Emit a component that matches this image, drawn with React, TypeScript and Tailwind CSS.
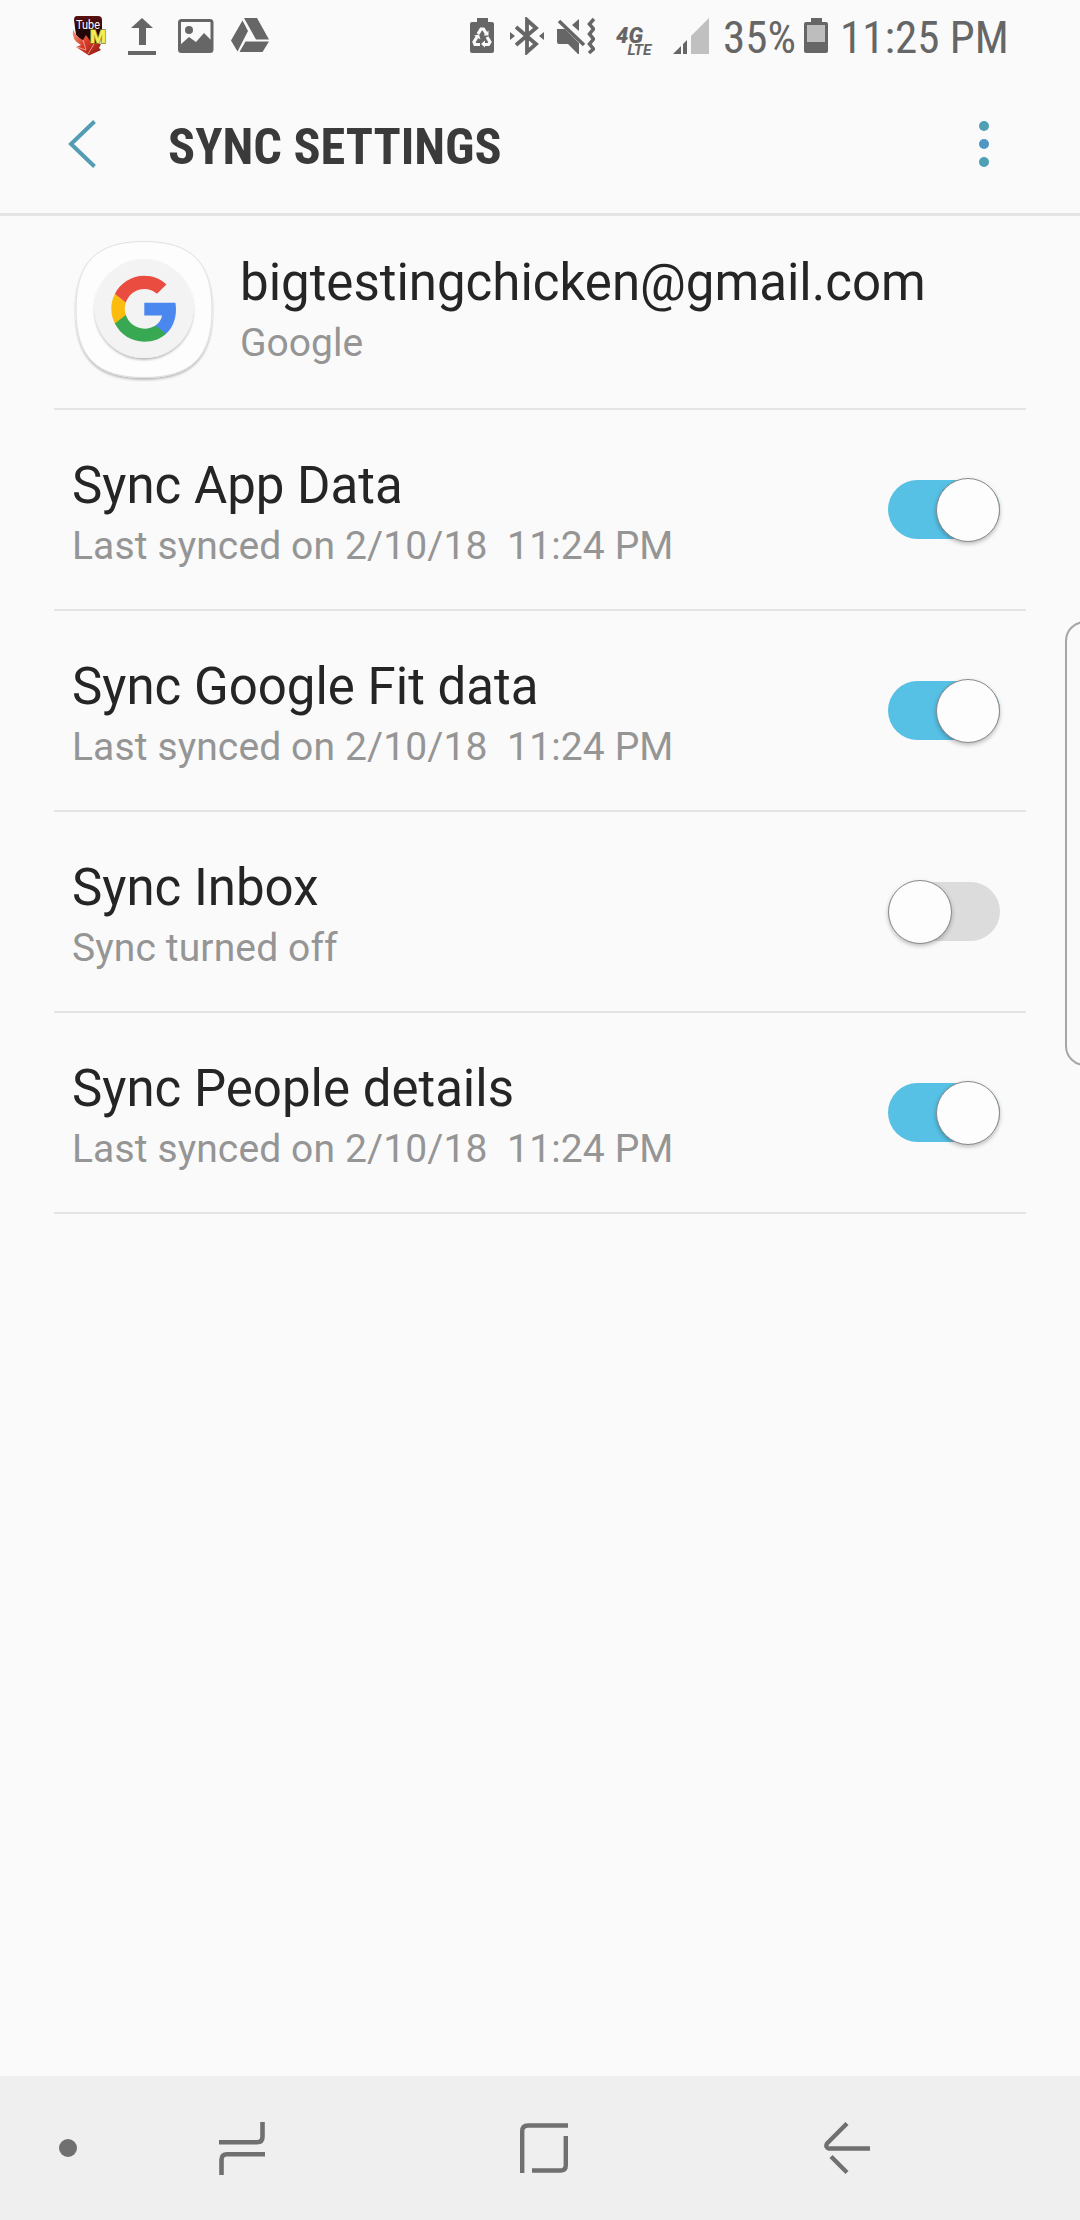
import type { ReactNode } from "react";

type SyncItem = { title: string; summary: string; enabled: boolean };

const items: SyncItem[] = [
    { title: "Sync App Data", summary: "Last synced on 2/10/18  11:24 PM", enabled: true },
    { title: "Sync Google Fit data", summary: "Last synced on 2/10/18  11:24 PM", enabled: true },
    { title: "Sync Inbox", summary: "Sync turned off", enabled: false },
    { title: "Sync People details", summary: "Last synced on 2/10/18  11:24 PM", enabled: true },
];

function TubeMateIcon() {
    return (
        <svg width="36" height="42" viewBox="0 0 36 42" className="ml-[72px] overflow-visible">
            <defs>
                <linearGradient id="tube" x1="0" y1="0" x2="0" y2="1">
                    <stop offset="0" stopColor="#5a1210" />
                    <stop offset="0.5" stopColor="#210507" />
                </linearGradient>
                <linearGradient id="arrow" x1="0" y1="0" x2="1" y2="1">
                    <stop offset="0" stopColor="#f59a80" />
                    <stop offset="0.5" stopColor="#d93a25" />
                    <stop offset="1" stopColor="#8a1512" />
                </linearGradient>
            </defs>
            <path d="M5 0h21q4 0 4 4v13l-6 12-12-2-8-8L2 4q0-4 3-4z" fill="url(#tube)" />
            <path d="M1 13q3 8 10 11l3-5 5 7 10 2-2 4 2 2-12 5.500L4 31l5-2Q-1 24 1 13z" fill="url(#arrow)" />
            <path d="M5 31l9 3-3-10M16 38l6-10" stroke="#fff" strokeWidth="1" fill="none" opacity="0.5" />
            <text x="4" y="13" fontSize="13.500" fontFamily="Roboto, sans-serif" fill="#fff" textLength="24" lengthAdjust="spacingAndGlyphs">Tube</text>
            <text x="18" y="27" fontSize="19" fontWeight="900" fontFamily="Roboto, sans-serif" fill="#f6ea55" stroke="#8b7a18" strokeWidth="1.500" paintOrder="stroke" textLength="16" lengthAdjust="spacingAndGlyphs">M</text>
        </svg>
    );
}

function StatusBar() {
    return (
        <div className="flex h-[75px] items-start pt-4 text-[#666]">
            <TubeMateIcon />
            <svg width="28" height="38" viewBox="0 0 28 38" className="mt-[1px] ml-5" fill="currentColor">
                <path d="M14 1l11 10h-7v17h-7V11H3zM0 34h28v4H0z" />
            </svg>
            <svg width="36" height="34" viewBox="0 0 36 34" className="mt-[3px] ml-[22px]">
                <rect x="1.5" y="1.5" width="32.5" height="31" rx="2" fill="none" stroke="currentColor" strokeWidth="3" />
                <circle cx="11" cy="11" r="4" fill="currentColor" />
                <path d="M2 26l9-8 7 5 8-9 8 8v10H2z" fill="currentColor" />
            </svg>
            <svg width="38" height="34" viewBox="0 0 38 34" className="mt-[2px] ml-[17px]" fill="currentColor">
                <path d="M13 0h13l12 21.500H25z M11.500 2.500l5.500 10.500L6.500 33.500 0 22.500z M14.500 23.500H38L31.500 34H8.500z" />
            </svg>

            <svg width="24" height="37" viewBox="0 0 24 37" className="mt-[1px] ml-[201px]">
                <path d="M7 1h11v4h4q2 0 2 2v27q0 2-2 2H2q-2 0-2-2V7q0-2 2-2h5z" fill="currentColor" />
                <g fill="none" stroke="#fafafa" strokeWidth="3.200">
                    <path d="M8 17l3-5h2.500l3 5M17 20l3 5-1.500 2.500H14M10 27.500H5L4 25l3-5" />
                </g>
                <path d="M18.500 13.500v5h-5zM4 18.500l5-1 1.500 5zM15 23.500v7L11 27z" fill="#fafafa" />
            </svg>
            <svg width="34" height="38" viewBox="0 0 34 38" className="mt-[1px] ml-4">
                <path d="M6 10l20 17-9 8V3l9 8L6 28" fill="none" stroke="currentColor" strokeWidth="3.800" />
                <path d="M0 15l5 4-5 4zM34 15l-5 4 5 4z" fill="currentColor" />
            </svg>
            <svg width="38" height="38" viewBox="0 0 38 38" className="mt-[1px] ml-[13px]">
                <path d="M0 12h8l14 14v11h-1L11 27H2q-2 0-2-2zM22 2v12l-7-6z" fill="currentColor" />
                <path d="M2 4l25 24" stroke="currentColor" strokeWidth="3.500" />
                <path d="M37 2l-4.500 5 4 5-4 5 4 5-4 5 4 5-4.500 4" fill="none" stroke="currentColor" strokeWidth="3.600" />
            </svg>
            <svg width="37" height="36" viewBox="0 0 37 36" className="mt-[10px] ml-[21px] overflow-visible" fill="currentColor" fontFamily="Roboto, sans-serif" fontStyle="italic" fontWeight="700">
                <text x="0" y="16.500" fontSize="21.500" fontWeight="900" textLength="27" lengthAdjust="spacingAndGlyphs">4G</text>
                <text x="11.500" y="29" fontSize="15" textLength="24" lengthAdjust="spacingAndGlyphs">LTE</text>
            </svg>
            <svg width="36" height="37" viewBox="0 0 36 37" className="mt-[2px] ml-5">
                <path d="M36 0v36H18V18z" fill="#c0c0c0" />
                <path d="M8 28v8H0zM14 22v14h-4V26z" fill="currentColor" />
            </svg>
            <span className="-mt-[5px] ml-[14px] w-[72px] font-[Roboto_Condensed,Roboto,sans-serif] text-[45px] leading-[53px] whitespace-nowrap">35%</span>
            <svg width="24" height="37" viewBox="0 0 24 37" className="mt-[1px] ml-[9px]">
                <path d="M7 1h11v4h4q2 0 2 2v27q0 2-2 2H2q-2 0-2-2V7q0-2 2-2h5z" fill="currentColor" />
                <path d="M3 8h18v17H3z" fill="#bdbdbd" />
            </svg>
            <span className="-mt-[5px] ml-[12px] font-[Roboto_Condensed,Roboto,sans-serif] text-[45px] leading-[53px] whitespace-nowrap">11:25 PM</span>
        </div>
    );
}

function Header() {
    return (
        <header className="flex h-[141px] items-center border-b-[3px] border-[#e4e4e4]">
            <svg width="32" height="50" viewBox="0 0 32 50" className="ml-[66px]">
                <path d="M28.500 2.500L5 25l23.500 22.500" fill="none" stroke="#539db3" strokeWidth="4" />
            </svg>
            <h1 className="ml-[70px] w-[811px] pt-[6px] font-[Roboto_Condensed,Roboto,sans-serif] text-[50.300px] leading-[60px] font-bold text-[#3a3a3a]">SYNC SETTINGS</h1>
            <div className="flex flex-col gap-2">
                <span className="size-[10px] rounded-full bg-[#4f9fb5]" />
                <span className="size-[10px] rounded-full bg-[#4c97c3]" />
                <span className="size-[10px] rounded-full bg-[#4f9fb5]" />
            </div>
        </header>
    );
}

function GoogleIcon() {
    return (
        <svg width="146" height="146" viewBox="0 0 146 146">
            <defs>
                <filter id="soft" x="-20%" y="-20%" width="140%" height="140%">
                    <feDropShadow dx="0" dy="2" stdDeviation="1.200" floodOpacity="0.250" />
                </filter>
            </defs>
            <path d="M73 5.500C120 5.500 141 26 141 73.500s-21 68-68 68S5 121 5 73.500s21-68 68-68z" fill="#fdfdfd" stroke="#e0e0e0" strokeWidth="1" filter="url(#soft)" />
            <circle cx="73" cy="72.500" r="49.500" fill="#f3f3f3" filter="url(#soft)" />
            <g transform="translate(37.300 36.800) scale(3)">
                <path fill="#4a87ee" d="M22.560 12.250c0-.78-.07-1.530-.2-2.250H12v4.260h5.920c-.26 1.370-1.040 2.530-2.210 3.310v2.770h3.570c2.080-1.920 3.280-4.740 3.280-8.090z" />
                <path fill="#38a853" d="M12 23c2.970 0 5.460-.98 7.280-2.660l-3.570-2.770c-.98.66-2.230 1.060-3.710 1.060-2.860 0-5.290-1.930-6.160-4.530H2.180v2.840C3.990 20.530 7.700 23 12 23z" />
                <path fill="#fbbc0d" d="M5.840 14.090c-.22-.66-.35-1.360-.35-2.090s.13-1.430.35-2.090L2.180 7.070C1.430 8.550 1 10.220 1 12s.43 3.450 1.180 4.930z" />
                <path fill="#ea4d40" d="M12 5.380c1.620 0 3.060.56 4.210 1.640l3.150-3.150C17.450 2.090 14.970 1 12 1 7.700 1 3.990 3.470 2.180 7.070l3.660 2.840c.87-2.600 3.300-4.530 6.160-4.530z" />
            </g>
        </svg>
    );
}

function Toggle({ enabled }: { enabled: boolean }) {
    return (
        <div className={enabled ? "flex h-[59px] w-28 items-center justify-end rounded-full bg-[#56c0e5]" : "flex h-[59px] w-28 items-center rounded-full bg-[#dcdcdc]"}>
            <span className="size-16 shrink-0 rounded-full border border-[#8a8a8a] bg-[#fdfdfd] shadow-[0_2px_4px_rgba(0,0,0,0.25)]" />
        </div>
    );
}

function Row({ children }: { children: ReactNode }) {
    return <li className="mx-[54px] flex h-[201px] items-center justify-between border-b-2 border-[#e4e4e4] pr-[26px] pl-[18px]">{children}</li>;
}

export default function App() {
    return (
        <div className="relative flex h-[2220px] w-[1080px] flex-col overflow-hidden bg-[#fafafa] font-[Roboto,sans-serif]">
            <StatusBar />
            <Header />
            <section className="mx-[54px] flex h-[194px] border-b-2 border-[#e4e4e4] pt-5 pl-[17px]">
                <GoogleIcon />
                <div className="ml-[23px] pt-[17px]">
                    <p className="text-[51px] leading-[60px] text-[#252525]">bigtestingchicken@gmail.com</p>
                    <p className="text-[39px] leading-[60px] text-[#959595]">Google</p>
                </div>
            </section>
            <ul>
                {items.map((item) => (
                    <Row key={item.title}>
                        <div className="pt-3">
                            <h2 className="text-[51px] leading-[60px] text-[#252525]">{item.title}</h2>
                            <p className="text-[39px] leading-[60px] tracking-[0.120px] whitespace-pre text-[#959595]">{item.summary}</p>
                        </div>
                        <Toggle enabled={item.enabled} />
                    </Row>
                ))}
            </ul>

            {/* edge panel handle */}
            <div className="absolute top-[621px] left-[1065px] h-[445px] w-10 rounded-[20px] border-2 border-[#a6a6a6]" />

            <nav className="mt-auto flex h-36 items-center bg-[#efefef] text-[#707070]">
                <span className="ml-[59px] size-[18px] rounded-full bg-[#707070]" />
                <svg width="46" height="53" viewBox="0 0 46 53" className="ml-[142px]" fill="none" stroke="currentColor" strokeWidth="4.600">
                    <path d="M0 20.300h38q5.500 0 5.500-5.500V0M46 32.300H8q-5.500 0-5.500 5.500V53" />
                </svg>
                <svg width="48" height="50" viewBox="0 0 48 50" className="ml-[255px]" fill="none" stroke="currentColor" strokeWidth="4.400">
                    <path d="M48 2.500H8Q2.200 2.500 2.200 8.300V50M12 47.500h28.500q5.300 0 5.300-5.300V13" />
                </svg>
                <svg width="47" height="53" viewBox="0 0 47 53" className="ml-[256px]" fill="none" stroke="currentColor" strokeWidth="4.400">
                    <path d="M23 1.500L3 21.500q-2 4 2 5H46M7 34.500l16 16" />
                </svg>
            </nav>
        </div>
    );
}
